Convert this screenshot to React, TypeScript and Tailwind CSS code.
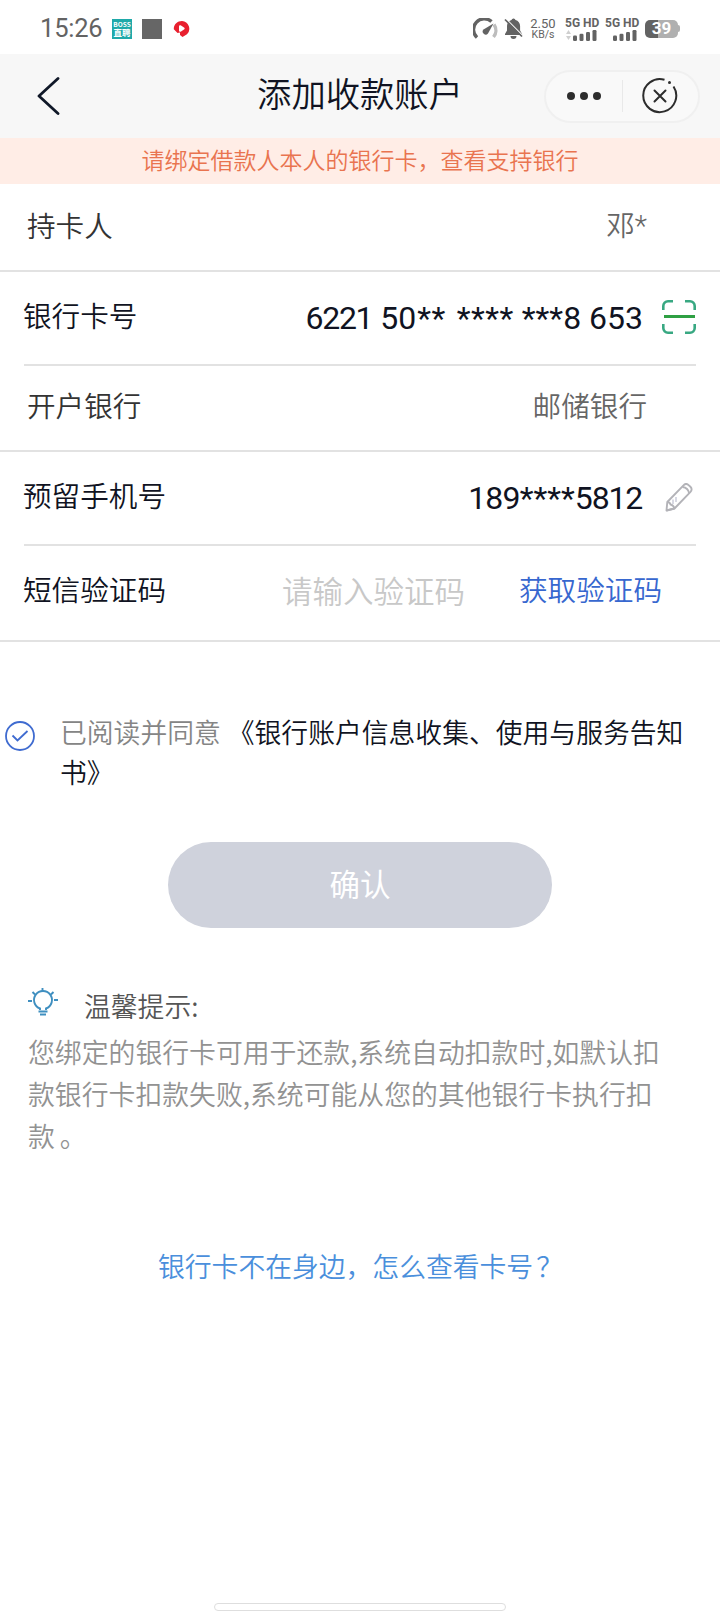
import React from 'react';

const SignalBars = ({ arrows = false }: { arrows?: boolean }) => (
  <div className="flex w-8 flex-col items-end">
    <span className="w-8 font-['Roboto'] text-[12px] leading-[12px] font-bold whitespace-nowrap">5G HD</span>
    <svg width="32" height="12" viewBox="0 0 32 12" fill="#636363">
      {arrows && <path d="M1 5l2.5-4L6 5zM1 7l2.5 4L6 7z" fill="#cfcfcf" />}
      <rect x="8" y="6.5" width="4" height="5.5" rx="1.2" />
      <rect x="14.5" y="4.8" width="4" height="7.2" rx="1.2" />
      <rect x="21" y="3" width="4" height="9" rx="1.2" />
      <rect x="27.5" y="1" width="4" height="11" rx="1.2" />
    </svg>
  </div>
);

const StatusBar = () => (
  <div className="flex h-[54px] items-center justify-between bg-white pt-[3px] pr-10 pl-10 text-[#636363]">
    <div className="flex items-center">
      <span className="w-[72px] pt-px font-['Roboto'] text-[25.5px] leading-none tracking-[-0.2px]">15:26</span>
      <div className="flex h-5 w-5 flex-col items-center justify-center bg-[#1fa9a9] font-['Noto_Sans_CJK_SC'] font-bold text-white">
        <span className="text-[6.5px] leading-[8px]">BOSS</span>
        <span className="text-[8.5px] leading-[9px]">直聘</span>
      </div>
      <div className="ml-[10px] h-5 w-5 bg-[#666]" />
      <svg className="ml-[11px]" width="17" height="18" viewBox="0 0 17 18">
        <path d="M9 1a8 7.800 0 0 1 5 13.200L9.500 17 7 15v-2.500L4.500 13 .8 9.300C.5 4.500 4.300 1 9 1z" fill="#e8202f" />
        <path d="M6 6.500c0-1 1-1.500 2-1l3 2c.9.600.9 1.500 0 2.100l-3 2c-1 .6-2 0-2-1z" fill="#fff" />
      </svg>
    </div>
    <div className="flex items-center">
      {/* speed gauge */}
      <svg width="25" height="21" viewBox="0 0 25 21" fill="none">
        <path d="M4 19.500A10.300 10.300 0 0 1 18.500 3.600" stroke="#636363" strokeWidth="3.400" />
        <path d="M21 6.500A10.300 10.300 0 0 1 20.500 19" stroke="#bdbdbd" strokeWidth="3.400" />
        <path d="M20.500 5.500L15 15.500a3 3 0 1 1-4.500-4z" fill="#636363" />
      </svg>
      {/* muted bell */}
      <svg className="ml-[6px]" width="19" height="21" viewBox="0 0 19 21">
        <path d="M9.500.5a2 2 0 0 1 2 1.500c2.800.8 4.600 3 4.600 6v4.500l2 3.500v1H1v-1l2-3.500V8c0-3 1.800-5.200 4.500-6a2 2 0 0 1 2-1.500zM6.500 18h6a3 3 0 0 1-6 0z" fill="#636363" />
        <path d="M1.500.5L19 18" stroke="#fff" strokeWidth="1.500" />
        <path d="M1 1.500L18 18.500" stroke="#636363" strokeWidth="1.700" />
      </svg>
      <div className="ml-[7px] flex w-[26px] flex-col items-center font-['Roboto'] leading-[11px] whitespace-nowrap">
        <span className="text-[13px]">2.50</span>
        <span className="text-[10.5px]">KB/s</span>
      </div>
      <div className="ml-[9px] flex gap-2">
        <SignalBars arrows />
        <SignalBars />
      </div>
      <div className="ml-[8px] flex items-center">
        <div className="flex h-[18px] w-[33px] items-center justify-center rounded-[5px] bg-linear-to-r from-[#636363] from-40% to-[#b0b0b0] to-40% font-['Roboto'] text-[17px] leading-none font-bold text-white">
          39
        </div>
        <div className="h-[7px] w-[2px] rounded-r bg-[#b0b0b0]" />
      </div>
    </div>
  </div>
);

const Header = () => (
  <header className="grid h-[84px] grid-cols-[1fr_auto_1fr] items-center bg-[#f7f7f7]">
    <svg className="ml-9" width="25" height="38" viewBox="0 0 25 38" fill="none">
      <path d="M22 1.500L3 19l19 17.500" stroke="#101828" strokeWidth="2.800" strokeLinecap="round" strokeLinejoin="round" />
    </svg>
    <h1 className="pb-[7px] text-[34.300px] leading-none font-[350] text-[#101322]">添加收款账户</h1>
    <div className="mr-5 flex h-[53px] w-[156px] items-center justify-self-end rounded-full border-2 border-[#f0f0f0] bg-[#f9f9f9]">
      <div className="flex flex-1 justify-center gap-[5px]">
        <span className="h-2 w-2 rounded-full bg-[#2d2d2d]" />
        <span className="h-2 w-2 rounded-full bg-[#2d2d2d]" />
        <span className="h-2 w-2 rounded-full bg-[#2d2d2d]" />
      </div>
      <div className="h-8 w-px bg-[#e9e9e9]" />
      <div className="flex flex-1 justify-center">
        <svg width="36" height="36" viewBox="0 0 36 36" fill="none" stroke="#2d2d2d" strokeWidth="2">
          <path d="M22.500 1.800A16.500 16.500 0 1 0 31.500 8.500" />
          <path d="M12.500 12.500l11 11M23.500 12.500l-11 11" strokeLinecap="round" />
          <circle cx="27.500" cy="4.500" r="1.500" fill="#2d2d2d" stroke="none" />
        </svg>
      </div>
    </div>
  </header>
);

const ScanIcon = () => (
  <svg width="34" height="34" viewBox="0 0 34 34" fill="none" stroke="#38a882" strokeWidth="2.600">
    <path d="M1.300 10V6a4.700 4.700 0 0 1 4.700-4.700h5M23 1.300h5A4.700 4.700 0 0 1 32.700 6v4M32.700 24v4a4.700 4.700 0 0 1-4.700 4.700h-5M11 32.700H6A4.700 4.700 0 0 1 1.300 28v-4" />
    <path d="M2 16.500h31" stroke="#2fa043" strokeWidth="3" />
  </svg>
);

const PencilIcon = () => (
  <svg width="28" height="29" viewBox="0 0 28 29" fill="none" stroke="#b3b3b8" strokeWidth="1.900" strokeLinejoin="round">
    <path d="M1.500 27.500l.8-8.500L18.500 2.300c1.500-1.600 3.600-1.600 5.100-.2l1.800 1.700c1.600 1.500 1.600 3.500.1 5L9.500 25.500z" />
    <path d="M17.500 4c3.500.5 6 2.500 6.600 6.300" />
    <path d="M1.500 27.500l8-2M2.300 19c2 .1 2.700.7 3.200 2.500 2 .3 3.200 1.500 4 4" />
    <path d="M8 16.500v4.500M11 14v5" stroke="#cfd0dc" strokeWidth="1.600" />
  </svg>
);

const App = () => {
  return (
    <div className="flex h-[1612px] w-[720px] flex-col overflow-hidden bg-white font-['Noto_Sans_CJK_SC',sans-serif]">
      <StatusBar />
      <Header />

      <div className="flex h-[46px] items-center justify-center bg-[#ffede6] pb-[4px] text-[23px] leading-none font-[350] text-[#e9744f]">
        请绑定借款人本人的银行卡，查看支持银行
      </div>

      {/* Form rows */}
      <section className="text-[28.600px] leading-none font-[350]">
        <div className="flex h-[88px] items-center justify-between border-b-2 border-[#e2e2e2] pr-[73px] pb-[4px] pl-[27px]">
          <span className="text-[#333]">持卡人</span>
          <span className="pt-[2px] font-['Roboto','Noto_Sans_CJK_SC',sans-serif] text-[#666]">邓*</span>
        </div>
        <div className="mx-6 flex h-[94px] items-center border-b-2 border-[#e2e2e2] text-[#101322]">
          <span className="-ml-px pb-[6px]">银行卡号</span>
          <span className="ml-auto font-['Roboto'] text-[32px] font-normal whitespace-nowrap">
            <span className="tracking-[-1.300px]">6221</span> <span className="mr-px">50</span><span className="mr-[3px] tracking-[0.500px]">**</span> <span className="tracking-[0.500px]">****</span> ***8 653
          </span>
          <div className="mb-[2px] ml-[19px]">
            <ScanIcon />
          </div>
        </div>
        <div className="flex h-[86px] items-center justify-between border-b-2 border-[#e2e2e2] pr-[73px] pb-[5px] pl-[27px]">
          <span className="text-[#333]">开户银行</span>
          <span className="text-[#666]">邮储银行</span>
        </div>
        <div className="mx-6 flex h-[94px] items-center border-b-2 border-[#e2e2e2] text-[#101322]">
          <span className="-ml-px pb-[6px]">预留手机号</span>
          <span className="ml-auto font-['Roboto'] text-[32px] font-normal">
            <span className="tracking-[-0.800px]">189</span>****<span className="tracking-[-1.200px]">5812</span>
          </span>
          <div className="mr-[3px] mb-[2px] ml-[23px]">
            <PencilIcon />
          </div>
        </div>
        <div className="flex h-24 items-center border-b-2 border-[#e2e2e2] pb-[8px] pl-[23px]">
          <span className="w-[259px] text-[#101322]">短信验证码</span>
          <span className="w-[237px] pt-[2px] text-[30.500px] text-[#c8c8c8]">请输入验证码</span>
          <span className="text-[#3767cf]">获取验证码</span>
        </div>
      </section>

      {/* Agreement */}
      <div className="mt-[70px] flex">
        <svg className="mt-[9px] ml-[5px] shrink-0" width="30" height="30" viewBox="0 0 30 30" fill="none" stroke="#3f6bd0" strokeWidth="1.800">
          <circle cx="15" cy="15" r="14" />
          <path d="M7.500 14.500l5 5L22.500 10" />
        </svg>
        <p className="ml-[25px] text-[26.800px] leading-[39.500px] font-[350] whitespace-nowrap text-[#101322]">
          <span className="mr-[7px] text-[#858585]">已阅读并同意</span>
          《银行账户信息收集、使用与服务告知
          <br />
          书》
        </p>
      </div>

      <button className="mt-[51px] h-[86px] w-96 shrink-0 self-center rounded-full bg-[#cfd2dc] pb-[3px] text-[30.500px] leading-none text-white">
        确认
      </button>

      {/* Tips */}
      <div className="mt-[58px] flex h-[42px] items-center">
        <svg className="mb-[10px] ml-7" width="31" height="28" viewBox="0 0 31 28" fill="none" stroke="#3f8fc0" strokeWidth="1.900">
          <path d="M12 22v-1.500a9 9 0 1 1 6 0V22" />
          <path d="M10.500 23.500h9M12 26.500h6M14.500 0v3.500M4.500 4l2.500 2.500M25.500 4L23 6.500M0 13h4M26 12h4" />
        </svg>
        <span className="mb-[2px] ml-[25px] text-[26.800px] leading-none font-[350] text-[#555]">温馨提示:</span>
      </div>
      <p className="mt-[3px] ml-7 text-[26.850px] leading-[42px] font-[350] whitespace-nowrap text-[#929292]">
        您绑定的银行卡可用于还款,系统自动扣款时,如默认扣
        <br />
        款银行卡扣款失败,系统可能从您的其他银行卡执行扣
        <br />
        款<span className="ml-[5px]">。</span>
      </p>

      <a className="mt-[89px] pl-[158px] text-[26.800px] leading-[40px] font-[350] text-[#4a8fdc]">
        银行卡不在身边，怎么查看卡号<span className="ml-[3px]">？</span>
      </a>

      <div className="mt-auto mb-px h-2 w-[292px] shrink-0 self-center rounded-full border border-[#dedede] bg-white" />
    </div>
  );
};

export default App;
